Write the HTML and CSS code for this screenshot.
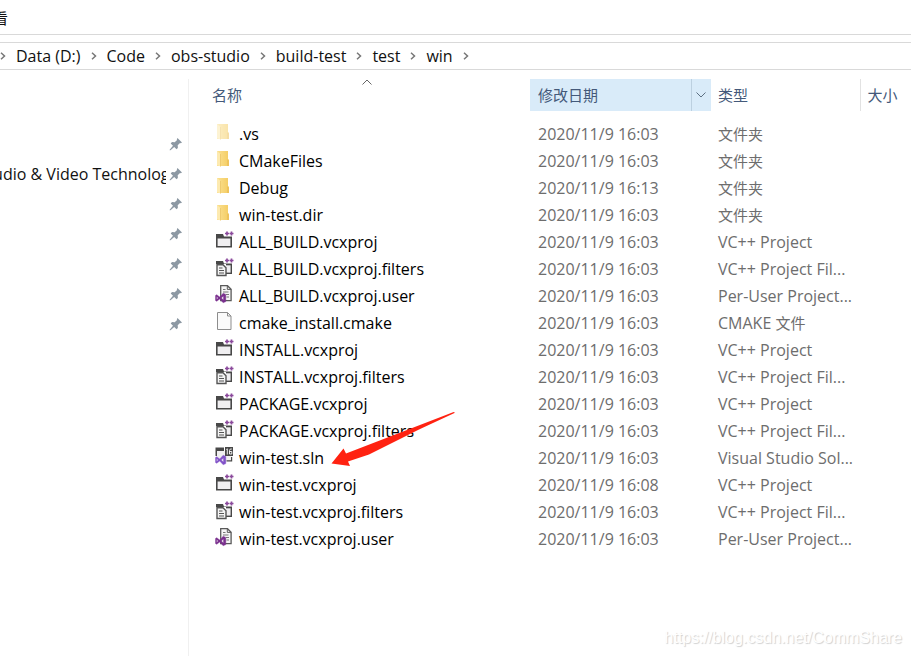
FILE: index.html
```html
<!DOCTYPE html>
<html lang="zh-CN">
<head>
<meta charset="utf-8">
<title>win</title>
<link rel="stylesheet" href="styles.css">
</head>
<body>
<svg class="defs" aria-hidden="true">
  <linearGradient id="fold" x1="0" x2="1"><stop offset="0" stop-color="#fbe192"/><stop offset="1" stop-color="#f4cc62"/></linearGradient>
  <symbol id="folder" viewBox="0 0 20 21">
    <path d="M3 1h11v8l1 1v6H3z" fill="url(#fold)"/>
    <path d="M13 9.500h1l1 1V16h-2z" fill="#eec35c"/>
    <path d="M3 1l3.500 3v12.500L3 15z" fill="#fdeab0"/>
    <path d="M6.500 4v12.500" stroke="#ecc566" stroke-width=".8"/>
  </symbol>
  <symbol id="plus" viewBox="0 0 20 21">
    <path d="M11 2.500h4M13 .5v4M15.500 2.500h4M17.500 .5v4" stroke="#8b4a9c" stroke-width="1.700"/>
  </symbol>
  <symbol id="project" viewBox="0 0 20 21">
    <path d="M2 3h7l1 2.500h8V16.500H2z" fill="#484848"/>
    <path d="M3.600 7.500h12.800V15H3.600z" fill="#f0eff1"/>
    <use href="#plus"/>
  </symbol>
  <symbol id="filters" viewBox="0 0 20 21">
    <path d="M2 3h7l1 2.500h8V16H12V6H2z" fill="#484848"/>
    <path d="M12 7.300h4.600v7.300H12z" fill="#f0eff1"/>
    <path d="M3 6.800h6l3 3v7.700H3z" fill="#f4f4f4" stroke="#555" stroke-width="1.400"/>
    <path d="M5 10h3.500M5 12.500h5M5 15h5" stroke="#555" stroke-width="1.100"/>
    <use href="#plus"/>
  </symbol>
  <symbol id="vs" viewBox="0 0 20 21">
    <path fill-rule="evenodd" d="M1.500 10.500l1.200-.8 3 2.300L9.200 8.200l2.600 1.200v7.200l-2.600 1.200L5.700 14l-3 2.300-1.200-.8zM2.700 11.500v3l1.500-1.500zM7.200 13l2.300 2v-4z"/>
  </symbol>
  <symbol id="user" viewBox="0 0 20 21">
    <path d="M6.700.7h6.800l3.600 3.500v11.500H6.700z" fill="#f5f5f5" stroke="#5a5a5a" stroke-width="1.300"/>
    <path d="M13.300.6v3.800h3.800" fill="none" stroke="#5a5a5a"/>
    <path d="M9 4.500h2.500M9 7h5.500M12 9.500h3M12.500 12h2.500" stroke="#777"/>
    <use href="#vs" fill="#7a2f8e" stroke="#7a2f8e" stroke-width=".4"/>
  </symbol>
  <symbol id="solution" viewBox="0 0 20 21">
    <path d="M3 4h14.500v9.500H3z" fill="#f0eff1"/>
    <path d="M1.500 .5H10v3.500H3v5H1.500zM12.500 14.500H18.200V10H17v3.200h-4.500z" fill="#484848"/>
    <path d="M11 0h8v9h-8z" fill="#484848"/>
    <path d="M12.300 2.500l1-.7V7.500M17.800 2h-1.500l-.8 1.500V7h2.300V4.500h-2.300" fill="none" stroke="#fff" stroke-width=".9"/>
    <use href="#vs" fill="#8152c8" stroke="#8152c8" stroke-width=".4"/>
  </symbol>
  <symbol id="file" viewBox="0 0 20 21">
    <path d="M3.500 .5h10l3.500 3.500v13.500H3.500z" fill="#fafafa" stroke="#8d8d8d"/>
    <path d="M13.500 .5V4H17" fill="none" stroke="#8d8d8d"/>
  </symbol>
  <symbol id="pin" viewBox="0 0 14 14">
    <path d="M8.500 1L13 5.500l-1.200.7-.8-.3-2.300 2.400.2 2.700-1.400 1.300-2.300-2.300L1.500 13.200.6 13.300.8 12.400 4 8.700 1.700 6.500 3 5.100l2.700.2L8.100 3l-.3-.8z" fill="#8c98a3"/>
  </symbol>
  <symbol id="next" viewBox="0 0 6 8">
    <path d="M1 .8L4.500 4 1 7.200" fill="none" stroke="#777" stroke-width="1.500"/>
  </symbol>
</svg>

<header class="menubar"><a href="#view" class="menu">查看</a></header>
<nav class="address" aria-label="路径">
  <svg class="next"><use href="#next"/></svg><a href="#d">Data (D:)</a>
  <svg class="next"><use href="#next"/></svg><a href="#code">Code</a>
  <svg class="next"><use href="#next"/></svg><a href="#obs">obs-studio</a>
  <svg class="next"><use href="#next"/></svg><a href="#build">build-test</a>
  <svg class="next"><use href="#next"/></svg><a href="#test">test</a>
  <svg class="next"><use href="#next"/></svg><a href="#win">win</a>
  <svg class="next"><use href="#next"/></svg>
</nav>

<div class="body">
  <aside class="sidebar">
    <ul>
      <li><svg class="pin"><use href="#pin"/></svg></li>
      <li><div class="clip"><a href="#avt">Audio &amp; Video Technology</a></div><svg class="pin"><use href="#pin"/></svg></li>
      <li><svg class="pin"><use href="#pin"/></svg></li>
      <li><svg class="pin"><use href="#pin"/></svg></li>
      <li><svg class="pin"><use href="#pin"/></svg></li>
      <li><svg class="pin"><use href="#pin"/></svg></li>
      <li><svg class="pin"><use href="#pin"/></svg></li>
    </ul>
  </aside>
  <main>
    <table>
      <colgroup><col class="c-name"><col class="c-date"><col class="c-type"><col></colgroup>
      <thead>
        <tr>
          <th class="name">名称<svg class="sort" viewBox="0 0 10 6"><path d="M.5 5.500L5 1l4.500 4.500" fill="none" stroke="#666"/></svg></th>
          <th class="date"><div class="split"><span>修改日期</span><button aria-label="筛选"><svg width="10" height="6" viewBox="0 0 10 6"><path d="M.5 .5L5 5 9.500 .5" fill="none" stroke="#5c6f82"/></svg></button></div></th>
          <th>类型</th>
          <th class="size">大小</th>
        </tr>
      </thead>
      <tbody>
        <tr><td><div class="file"><svg class="faded"><use href="#folder"/></svg>.vs</div></td><td>2020/11/9 16:03</td><td><span class="zh">文件夹</span></td><td></td></tr>
        <tr><td><div class="file"><svg><use href="#folder"/></svg>CMakeFiles</div></td><td>2020/11/9 16:03</td><td><span class="zh">文件夹</span></td><td></td></tr>
        <tr><td><div class="file"><svg><use href="#folder"/></svg>Debug</div></td><td>2020/11/9 16:13</td><td><span class="zh">文件夹</span></td><td></td></tr>
        <tr><td><div class="file"><svg><use href="#folder"/></svg>win-test.dir</div></td><td>2020/11/9 16:03</td><td><span class="zh">文件夹</span></td><td></td></tr>
        <tr><td><div class="file"><svg><use href="#project"/></svg>ALL_BUILD.vcxproj</div></td><td>2020/11/9 16:03</td><td>VC++ Project</td><td></td></tr>
        <tr><td><div class="file"><svg><use href="#filters"/></svg>ALL_BUILD.vcxproj.filters</div></td><td>2020/11/9 16:03</td><td>VC++ Project Fil...</td><td></td></tr>
        <tr><td><div class="file"><svg><use href="#user"/></svg>ALL_BUILD.vcxproj.user</div></td><td>2020/11/9 16:03</td><td>Per-User Project...</td><td></td></tr>
        <tr><td><div class="file"><svg><use href="#file"/></svg>cmake_install.cmake</div></td><td>2020/11/9 16:03</td><td>CMAKE <span class="zh">文件</span></td><td></td></tr>
        <tr><td><div class="file"><svg><use href="#project"/></svg>INSTALL.vcxproj</div></td><td>2020/11/9 16:03</td><td>VC++ Project</td><td></td></tr>
        <tr><td><div class="file"><svg><use href="#filters"/></svg>INSTALL.vcxproj.filters</div></td><td>2020/11/9 16:03</td><td>VC++ Project Fil...</td><td></td></tr>
        <tr><td><div class="file"><svg><use href="#project"/></svg>PACKAGE.vcxproj</div></td><td>2020/11/9 16:03</td><td>VC++ Project</td><td></td></tr>
        <tr><td><div class="file"><svg><use href="#filters"/></svg>PACKAGE.vcxproj.filters</div></td><td>2020/11/9 16:03</td><td>VC++ Project Fil...</td><td></td></tr>
        <tr><td><div class="file"><svg><use href="#solution"/></svg>win-test.sln</div></td><td>2020/11/9 16:03</td><td>Visual Studio Sol...</td><td></td></tr>
        <tr><td><div class="file"><svg><use href="#project"/></svg>win-test.vcxproj</div></td><td>2020/11/9 16:08</td><td>VC++ Project</td><td></td></tr>
        <tr><td><div class="file"><svg><use href="#filters"/></svg>win-test.vcxproj.filters</div></td><td>2020/11/9 16:03</td><td>VC++ Project Fil...</td><td></td></tr>
        <tr><td><div class="file"><svg><use href="#user"/></svg>win-test.vcxproj.user</div></td><td>2020/11/9 16:03</td><td>Per-User Project...</td><td></td></tr>
      </tbody>
    </table>
    <svg class="arrow" viewBox="0 0 124 56" aria-hidden="true"><path d="M.5 52.500L12.500 37.500 15 42.500 122 1.200Q124 .5 123.500 2L88 18.500 38 43.500 17 50.500 19 55z" fill="#ff2211"/></svg>
  </main>
</div>
<div class="watermark">https://blog.csdn.net/CommShare</div>
</body>
</html>
```

FILE: styles.css
```css
* { box-sizing: border-box; }

body {
  margin: 0;
  min-height: 100vh;
  display: flex;
  flex-direction: column;
  overflow: hidden;
  background: #fff;
  color: #111;
  font: 16px/27px "Open Sans", "Noto Sans CJK SC", sans-serif;
}

a { color: inherit; text-decoration: none; }
.defs { position: absolute; width: 0; height: 0; }

.menubar {
  height: 35px;
  padding-top: 5px;
  border-bottom: 1px solid #d9d9d9;
  font-size: 15px;
}
.menu { display: block; margin-left: -22px; }

.address {
  display: flex;
  align-items: center;
  gap: 10px;
  height: 28px;
  margin-top: 7px;
  border: solid #d9d9d9;
  border-width: 1px 0;
  line-height: 26px;
  white-space: nowrap;
}
.next { width: 6px; height: 8px; flex: none; }

.body { flex: 1; display: flex; padding-top: 9px; }

.sidebar {
  width: 189px;
  flex: none;
  padding-top: 50px;
  border-right: 1px solid #f0f0f0;
}
.sidebar ul { margin: 0; padding: 0; list-style: none; }
.sidebar li {
  display: flex;
  align-items: center;
  justify-content: flex-end;
  height: 30px;
  padding-right: 5px;
}
.clip { flex: 1; overflow: hidden; white-space: nowrap; margin-right: 3px; }
.clip a { margin-left: -17px; }
.pin { width: 14px; height: 14px; flex: none; }

main { flex: 1; min-width: 0; position: relative; }

table { width: 100%; table-layout: fixed; border-collapse: collapse; }
.c-name { width: 341px; }
.c-date { width: 181px; }
.c-type { width: 149px; }

th {
  height: 32px;
  padding: 0 0 0 7px;
  text-align: left;
  font-size: 15px;
  font-weight: 400;
  color: #44597a;
}
th.name { position: relative; padding-left: 23px; }
th.date { padding-left: 8px; background: #d9ebf9; }
th.size { border-left: 1px solid #e2e2e2; }
.sort { position: absolute; left: 173px; top: 0; width: 10px; height: 6px; }
.split { display: flex; justify-content: space-between; height: 32px; line-height: 32px; }
.split button {
  display: flex;
  align-items: center;
  justify-content: center;
  width: 20px;
  padding: 0 2px 0 0;
  border: 0;
  border-left: 1px solid #bcd0e0;
  background: none;
}

tbody::before { content: ""; display: block; height: 9px; }
td {
  height: 27px;
  padding: 0 0 0 7px;
  color: #6d6d6d;
  line-height: 26px;
  white-space: nowrap;
}
td:nth-child(2) { padding-left: 8px; }
td:first-child { padding-left: 25px; color: #000; }
.zh { font-size: 15px; }
.file { display: flex; align-items: center; gap: 5px; height: 27px; }
.file svg { width: 20px; height: 21px; flex: none; }
.faded { opacity: .55; }

.arrow { position: absolute; left: 142px; top: 332px; width: 124px; height: 56px; }

.watermark {
  position: absolute;
  right: 9px;
  bottom: 8px;
  font: 16px/20px "Liberation Sans", sans-serif;
  color: #fff;
  text-shadow: 1px 1px 1px #d0d0d0;
}
```
